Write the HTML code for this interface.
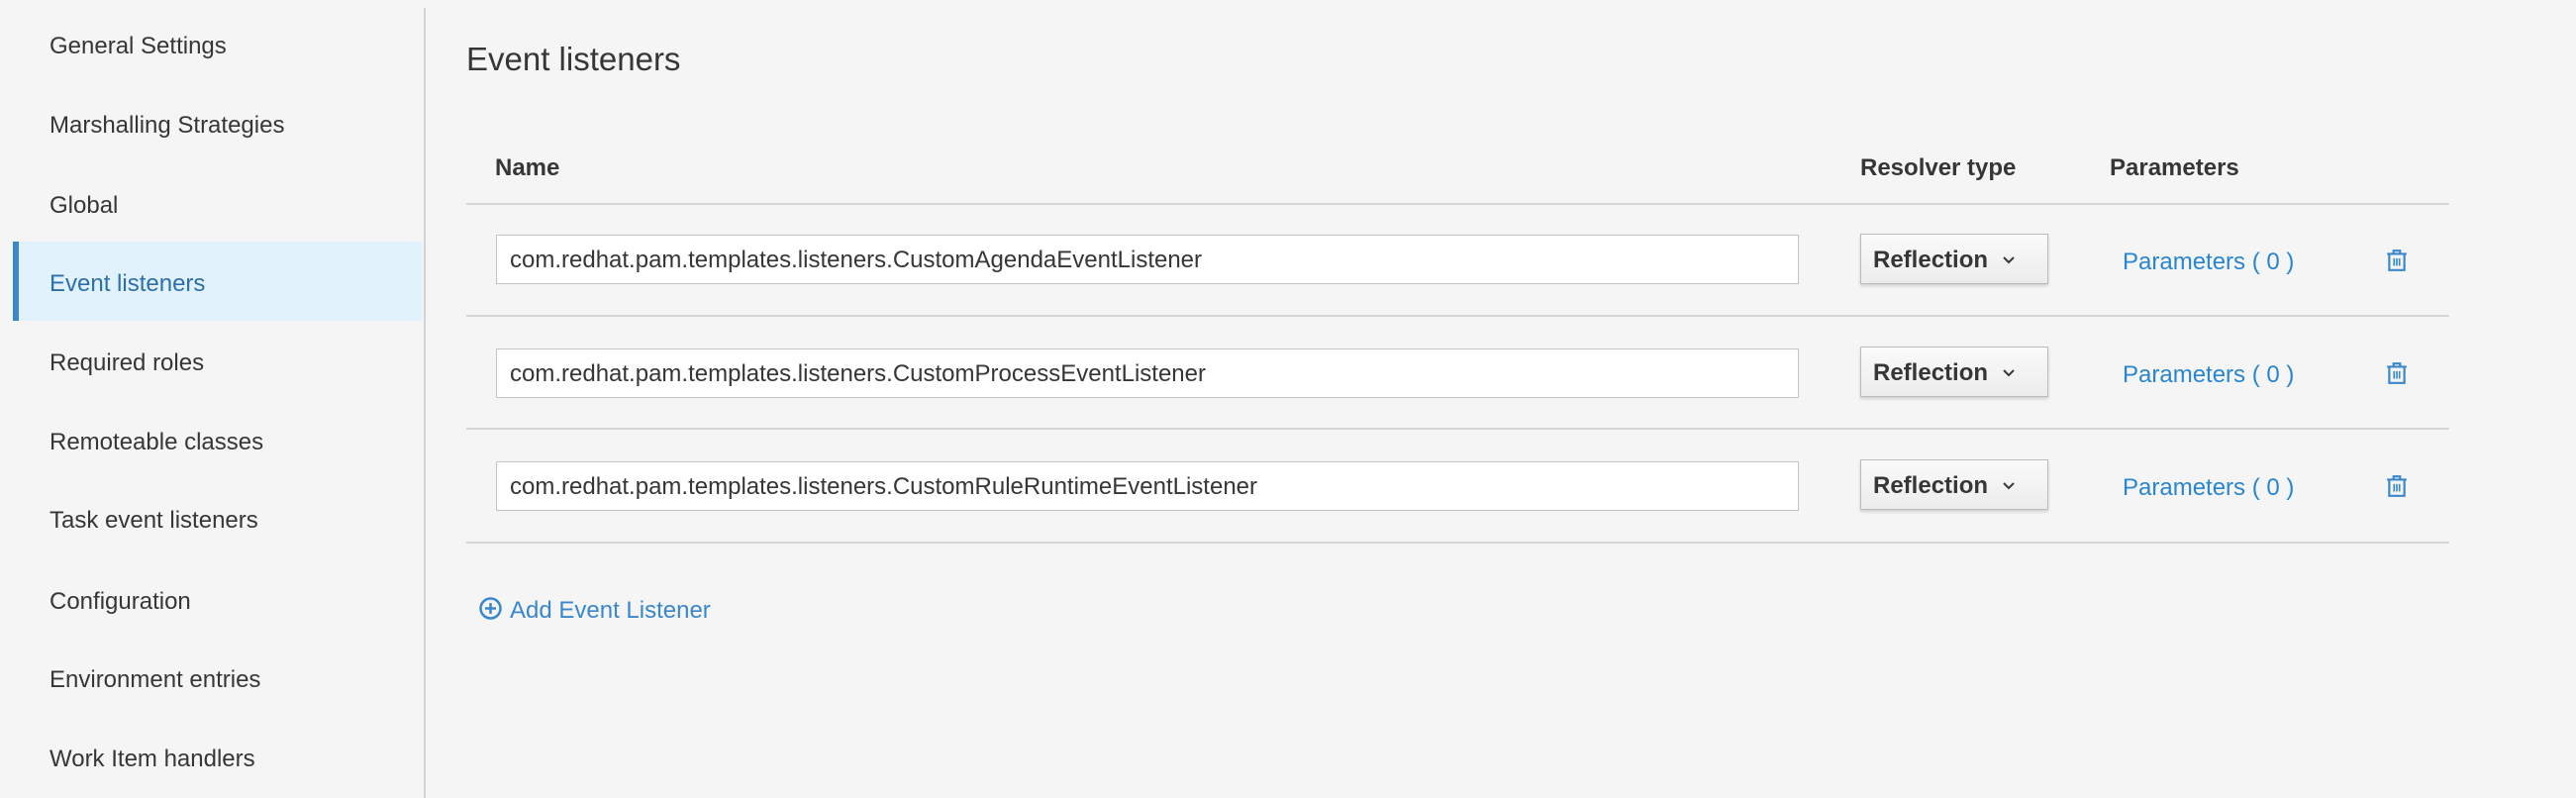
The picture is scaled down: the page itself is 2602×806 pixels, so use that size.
<!DOCTYPE html>
<html><head><meta charset="utf-8"><style>
body{margin:0;width:2602px;height:806px;background:#f5f5f5;font-family:"Liberation Sans",sans-serif;color:#363636;position:relative;overflow:hidden}
.a{position:absolute}
.nav{left:50px;font-size:24px;line-height:30px}
.hdr{font-size:24px;font-weight:bold;color:#363636}
.line{left:471px;width:2003px;height:2px;background:#d6d6d6}
.inp{left:501px;height:48px;background:#fff;border:1px solid #c4c4c4;font-size:24px;line-height:50px;padding-left:13px;box-sizing:content-box;width:1301px}
.dd{left:1879px;width:188px;height:49px;border:1px solid #bbb;background:linear-gradient(#fafafa,#ececec);box-shadow:0 2px 3px rgba(0,0,0,.15);font-size:24px;font-weight:bold;line-height:51px}
.dd span{position:absolute;left:12px}
.dd svg{position:absolute;left:142px;top:21px}
.lnk{left:2144px;font-size:24px;color:#2a85d0;line-height:30px}
.tr{left:2410px}
</style></head><body>
<div class="a" style="left:428px;top:8px;width:2px;height:798px;background:#d2d2d2"></div>
<div class="a" style="left:13px;top:244px;width:413px;height:80px;background:#e1f2fc"></div>
<div class="a" style="left:13px;top:244px;width:6px;height:80px;background:#3a87cc"></div>
<div class="a nav" style="top:32px">General Settings</div>
<div class="a nav" style="top:112px">Marshalling Strategies</div>
<div class="a nav" style="top:193px">Global</div>
<div class="a nav" style="top:272px;color:#2b6fad">Event listeners</div>
<div class="a nav" style="top:352px">Required roles</div>
<div class="a nav" style="top:432px">Remoteable classes</div>
<div class="a nav" style="top:511px">Task event listeners</div>
<div class="a nav" style="top:593px">Configuration</div>
<div class="a nav" style="top:672px">Environment entries</div>
<div class="a nav" style="top:752px">Work Item handlers</div>

<div class="a" style="left:471px;top:40px;font-size:33px;line-height:40px">Event listeners</div>
<div class="a hdr" style="left:500px;top:156px">Name</div>
<div class="a hdr" style="left:1879px;top:156px">Resolver type</div>
<div class="a hdr" style="left:2131px;top:156px">Parameters</div>
<div class="a line" style="top:205px"></div>
<div class="a line" style="top:318px"></div>
<div class="a line" style="top:432px"></div>
<div class="a line" style="top:547px"></div>

<div class="a inp" style="top:237px">com.redhat.pam.templates.listeners.CustomAgendaEventListener</div>
<div class="a inp" style="top:352px">com.redhat.pam.templates.listeners.CustomProcessEventListener</div>
<div class="a inp" style="top:466px">com.redhat.pam.templates.listeners.CustomRuleRuntimeEventListener</div>

<div class="a dd" style="top:236px"><span>Reflection</span><svg width="14" height="10" viewBox="0 0 14 10"><path d="M2 2 L7 7 L12 2" fill="none" stroke="#363636" stroke-width="2"/></svg></div>
<div class="a dd" style="top:350px"><span>Reflection</span><svg width="14" height="10" viewBox="0 0 14 10"><path d="M2 2 L7 7 L12 2" fill="none" stroke="#363636" stroke-width="2"/></svg></div>
<div class="a dd" style="top:464px"><span>Reflection</span><svg width="14" height="10" viewBox="0 0 14 10"><path d="M2 2 L7 7 L12 2" fill="none" stroke="#363636" stroke-width="2"/></svg></div>

<div class="a lnk" style="top:250px">Parameters ( 0 )</div>
<div class="a lnk" style="top:364px">Parameters ( 0 )</div>
<div class="a lnk" style="top:478px">Parameters ( 0 )</div>

<svg class="a tr" style="top:251px" width="22" height="24" viewBox="0 0 20 22"><g fill="none" stroke="#3a87cc" stroke-width="2"><path d="M1 5H19M7 5V2H13V5M3 5V20H17V5"/><path d="M7.5 9V16M10 9V16M12.5 9V16" stroke-width="1.5"/></g></svg>
<svg class="a tr" style="top:365px" width="22" height="24" viewBox="0 0 20 22"><g fill="none" stroke="#3a87cc" stroke-width="2"><path d="M1 5H19M7 5V2H13V5M3 5V20H17V5"/><path d="M7.5 9V16M10 9V16M12.5 9V16" stroke-width="1.5"/></g></svg>
<svg class="a tr" style="top:479px" width="22" height="24" viewBox="0 0 20 22"><g fill="none" stroke="#3a87cc" stroke-width="2"><path d="M1 5H19M7 5V2H13V5M3 5V20H17V5"/><path d="M7.5 9V16M10 9V16M12.5 9V16" stroke-width="1.5"/></g></svg>

<svg class="a" style="left:484px;top:603px" width="23" height="23" viewBox="0 0 23 23"><circle cx="11.5" cy="11.5" r="10" fill="none" stroke="#3a87cc" stroke-width="2.5"/><path d="M11.5 6V17M6 11.5H17" stroke="#3a87cc" stroke-width="2.5"/></svg>
<div class="a" style="left:515px;top:602px;font-size:24px;line-height:30px;color:#3a87cc">Add Event Listener</div>
</body></html>
